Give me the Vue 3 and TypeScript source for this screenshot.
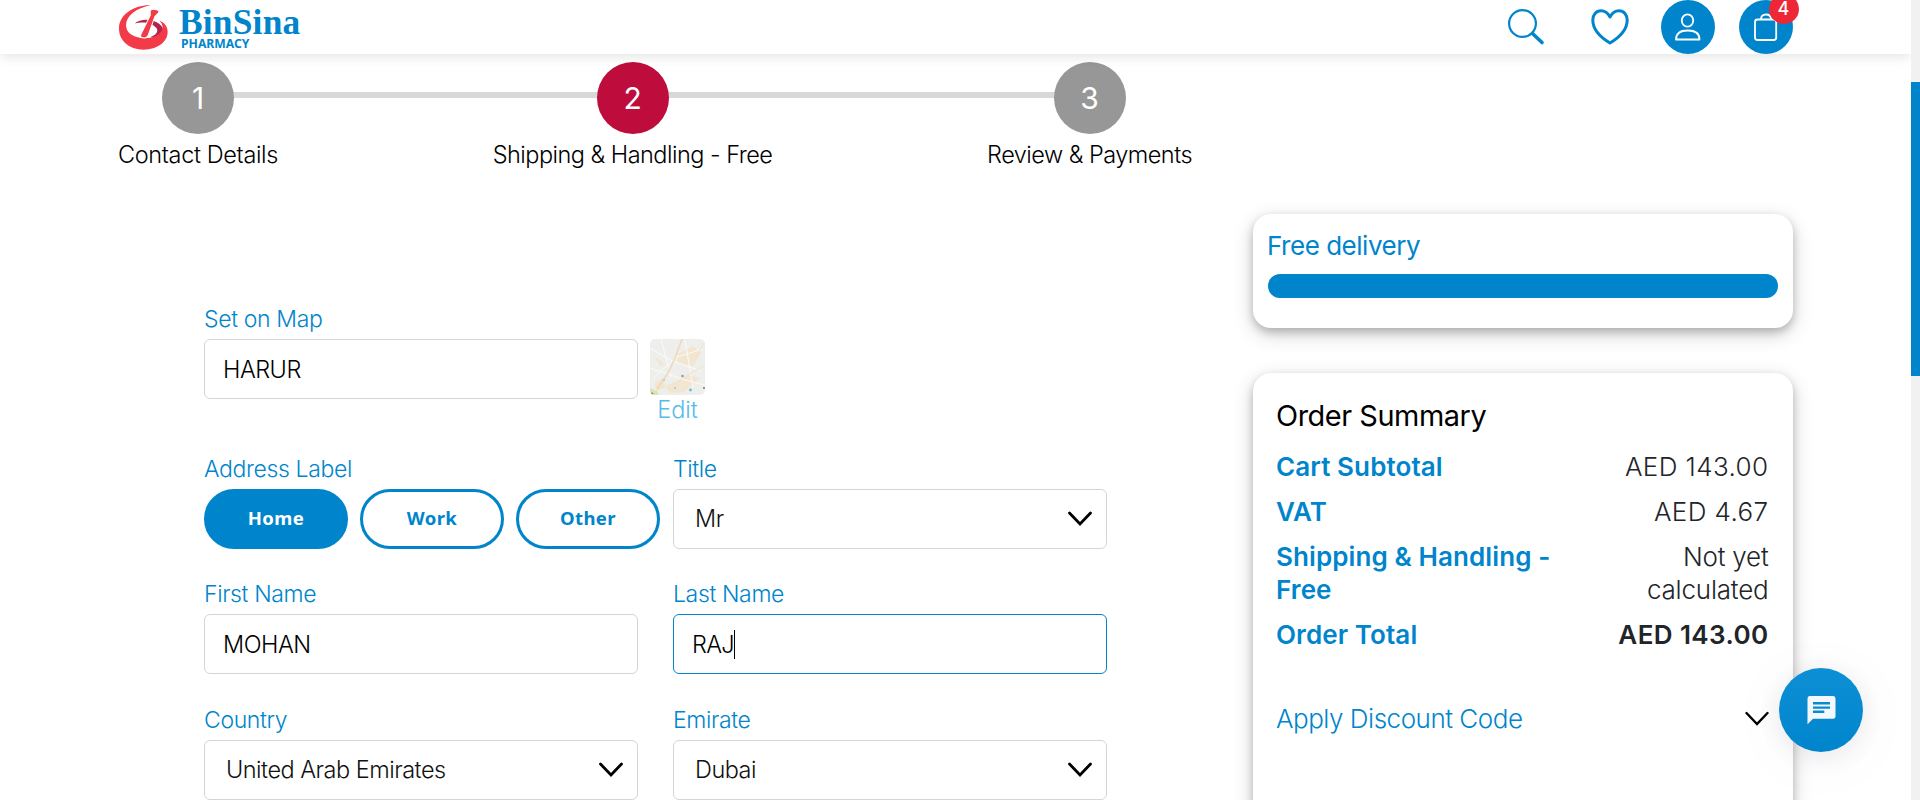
<script setup lang="ts">
interface Step { n: number; label: string; active?: boolean }
interface Field { label: string; value: string; kind: 'input' | 'select'; focused?: boolean }
interface Line { label: string; value: string; strong?: boolean; note?: boolean }

const steps: Step[] = [
  { n: 1, label: 'Contact Details' },
  { n: 2, label: 'Shipping & Handling - Free', active: true },
  { n: 3, label: 'Review & Payments' }
]
const tags = ['Home', 'Work', 'Other']
const fields: Field[] = [
  { label: 'Title', value: 'Mr', kind: 'select' },
  { label: 'First Name', value: 'MOHAN', kind: 'input' },
  { label: 'Last Name', value: 'RAJ', kind: 'input', focused: true },
  { label: 'Country', value: 'United Arab Emirates', kind: 'select' },
  { label: 'Emirate', value: 'Dubai', kind: 'select' }
]
const lines: Line[] = [
  { label: 'Cart Subtotal', value: 'AED 143.00' },
  { label: 'VAT', value: 'AED 4.67' },
  { label: 'Shipping & Handling - Free', value: 'Not yet calculated', note: true },
  { label: 'Order Total', value: 'AED 143.00', strong: true }
]
</script>

<template>
  <div class="screen">
    <div class="page">
      <header class="header">
        <div class="logo">
          <svg class="mark" viewBox="57 14 146 134">
            <path d="M104 69C118 57 142 55 160 62C182 70 193 84 188 98C178 110 164 112 150 110C168 104 176 92 168 82C156 68 128 62 104 69Z" fill="#b4234b" />
            <path d="M152 15C110 12 57 38 57 84C57 124 92 147 130 147C172 147 202 124 202 94C202 78 192 66 178 61C188 72 190 84 182 94C170 110 146 116 122 112C98 108 78 96 78 74C78 46 108 24 152 15Z" fill="#f23a48" />
            <path d="M150 31Q153 26 163 27L174 30Q178 33 174 38L164 48L144 104Q142 110 134 112L124 111Q120 108 122 102L150 45Z" fill="#f23a48" stroke="#fff" stroke-width="3" />
          </svg>
          <div class="brand"><span class="name">BinSina</span><span class="sub">PHARMACY</span></div>
        </div>
        <nav class="actions">
          <svg class="search" width="38" height="38" viewBox="0 0 38 38" fill="none" stroke="#0085cc">
            <circle cx="15.500" cy="15.500" r="13.400" stroke-width="2.200" /><path d="M25.500 25.500L35 34.500" stroke-width="3.600" stroke-linecap="round" />
          </svg>
          <svg class="heart" width="38" height="36" viewBox="0 0 38 36" fill="none" stroke="#0085cc" stroke-width="3" stroke-linejoin="round">
            <path d="M19 8C16.500 3.400 12.800 1.800 10 1.800C5 1.800 1.800 6 1.800 11C1.800 19.500 9 28 19 34C29 28 36.200 19.500 36.200 11C36.200 6 33 1.800 28 1.800C25.200 1.800 21.500 3.400 19 8Z" />
          </svg>
          <div class="round user">
            <svg width="28" height="30" viewBox="0 0 28 30" fill="none" stroke="#fff" stroke-width="1.800">
              <ellipse cx="13.500" cy="8.500" rx="5.700" ry="6.200" /><path d="M2 27.500Q2 18.500 13.700 18.500Q25.500 18.500 25.500 27.500Z" stroke-linejoin="round" />
            </svg>
          </div>
          <div class="round">
            <svg width="26" height="30" viewBox="0 0 26 30" fill="none" stroke="#fff" stroke-width="1.800">
              <rect x="2" y="7.500" width="21.200" height="20.500" rx="2.500" /><path d="M8 7.500Q8 2.500 13 2.500Q18 2.500 18 7.500" />
            </svg>
            <span class="badge">4</span>
          </div>
        </nav>
      </header>

      <ol class="steps">
        <li v-for="s in steps" :key="s.n" :class="{ active: s.active }">
          <span class="dot">{{ s.n }}</span><span class="caption">{{ s.label }}</span>
        </li>
      </ol>

      <main class="content">
        <section class="form">
          <div class="field map-field">
            <label>Set on Map</label>
            <div class="map-row">
              <div class="box">HARUR</div>
              <div class="map">
                <svg width="55" height="56" viewBox="0 0 55 56">
                  <rect width="55" height="56" fill="#eeeeec" />
                  <g fill="#f3e6d0"><path d="M28 15L43 7L51 14L43 27L27 24Z" /><path d="M4 17L15 25L10 27Z" /><path d="M5 44L13 39L15 48L6 53Z" /><path d="M16 49L38 36L50 39L34 53L20 54Z" /></g>
                  <g fill="none" stroke="#fafafa"><path d="M0 9L20 21L51 32M3 39L27 18L53 10M11 0L21 38M35 1L43 49M0 29L35 41L55 46" /></g>
                  <path d="M32 0L25 19L18 34L7 50" fill="none" stroke="#eed9b5" stroke-width="1.600" />
                  <path d="M8 50L25 44L41 34L54 27M54 4L46 19" fill="none" stroke="#f2e2c2" />
                  <path d="M0 49L8 53L8 56L0 56Z" fill="#d5e6b5" />
                  <circle cx="32.500" cy="37" r="1.300" fill="#a28fc7" /><circle cx="40.500" cy="51" r="1.400" fill="#6cbbd1" /><circle cx="2" cy="55" r="1.400" fill="#bc6753" /><circle cx="14" cy="41" r=".8" fill="#8db7d5" /><circle cx="25" cy="49" r=".8" fill="#80a5d0" /><circle cx="54" cy="49" r="1" fill="#777" />
                </svg>
                <a>Edit</a>
              </div>
            </div>
          </div>
          <div class="grid">
            <div class="field">
              <label>Address Label</label>
              <div class="tags">
                <button v-for="(t, i) in tags" :key="t" :class="{ on: i === 0 }">{{ t }}</button>
              </div>
            </div>
            <div v-for="f in fields" :key="f.label" class="field">
              <label>{{ f.label }}</label>
              <div class="box" :class="[f.kind, { focused: f.focused }]">
                <span>{{ f.value }}</span><i v-if="f.focused" class="caret"></i>
                <svg v-if="f.kind === 'select'" class="chevron" width="24" height="16" viewBox="0 0 24 16"><path d="M1.500 2L12 13L22.500 2" /></svg>
              </div>
            </div>
          </div>
        </section>

        <aside class="side">
          <div class="card delivery">
            <p>Free delivery</p>
            <div class="bar"></div>
          </div>
          <div class="card summary">
            <h2>Order Summary</h2>
            <dl>
              <div v-for="l in lines" :key="l.label" :class="{ strong: l.strong, note: l.note }">
                <dt>{{ l.label }}</dt><dd>{{ l.value }}</dd>
              </div>
            </dl>
            <div class="discount">
              <span>Apply Discount Code</span>
              <svg class="chevron" width="24" height="16" viewBox="0 0 24 16"><path d="M1.500 2L12 13L22.500 2" /></svg>
            </div>
          </div>
        </aside>
      </main>

      <button class="chat" aria-label="Chat">
        <svg width="29" height="29" viewBox="0 0 29 29">
          <path d="M3 0H26Q28.500 0 28.500 3V20Q28.500 22.800 26 22.800H6L.5 28.300V3Q.5 0 3 0Z" fill="#f2f8fd" />
          <path d="M6 7.300H23M6 11.600H23M6 15.800H17.300" stroke="#0a8bd0" stroke-width="2.400" />
        </svg>
      </button>
    </div>
    <div class="scrollbar"><div class="thumb"></div></div>
  </div>
</template>

<style>
body { margin: 0; overflow: hidden; }
</style>

<style scoped>
.screen { display: flex; width: 1920px; height: 800px; overflow: hidden; background: #fff; font-family: Inter, "Liberation Sans", sans-serif; color: #000; }
.page { position: relative; width: 1911px; height: 800px; overflow: hidden; }
.scrollbar { width: 9px; padding-top: 82px; background: #f1f1f1; box-sizing: border-box; }
.thumb { height: 294px; background: #0085cc; }

.header { position: relative; display: flex; justify-content: space-between; height: 54px; padding: 0 118px 0 119px; background: #fff; box-shadow: 0 2px 12px rgba(0, 0, 0, .12); }
.logo { display: flex; gap: 11px; }
.mark { width: 49px; height: 45px; margin-top: 4.500px; }
.brand { display: flex; flex-direction: column; color: #0085cc; }
.name { height: 36px; font: 700 35.400px/45px "Liberation Serif", serif; letter-spacing: .2px; }
.sub { margin-left: 2px; font: 700 12.200px/16px "Noto Sans", sans-serif; }
.actions { display: flex; }
.search { margin: 8px 46px 0 0; }
.heart { margin: 9px 32px 0 0; }
.round { position: relative; display: flex; align-items: center; justify-content: center; width: 54px; height: 54px; border-radius: 50%; background: #0085cc; }
.user { margin-right: 24px; }
.round svg { margin-left: -1px; }
.badge { position: absolute; top: -6px; left: 30px; width: 30px; height: 30px; border-radius: 50%; background: #ee2737; color: #fff; font-size: 18px; font-weight: 500; line-height: 30px; text-align: center; text-indent: -1px; }

.steps { display: flex; justify-content: space-between; width: 1074px; margin: 8px 0 0 118px; padding: 0; list-style: none; background: linear-gradient(#d8d8d8, #d8d8d8) 80px 30px / 890px 6px no-repeat; }
.steps li { display: flex; flex-direction: column; align-items: center; }
.steps li:first-child .caption { letter-spacing: -.36px; }
.dot { width: 72px; height: 72px; border-radius: 50%; background: #979797; color: #fff; font-size: 30px; line-height: 72px; text-align: center; }
.active .dot { background: #be0c3d; }
.caption { font-size: 23.500px; font-weight: 360; line-height: 41px; letter-spacing: -.52px; white-space: nowrap; }

.content { display: flex; }
.form { width: 904px; margin: 123px 145px 0 204px; flex: none; }
.field label { display: block; height: 41px; color: #0085cc; font-size: 23px; font-weight: 360; line-height: 42px; letter-spacing: -.36px; white-space: nowrap; }
.box { display: flex; align-items: center; box-sizing: border-box; width: 434px; height: 60px; padding: 0 14px 0 18px; border: 1px solid #d5d5d5; border-radius: 6px; font-size: 23.500px; font-weight: 360; letter-spacing: -.5px; }
.box.select { padding-left: 21px; color: #111; }
.box.focused { border-color: #0085cc; }
.focused span { letter-spacing: -.7px; }
.caret { width: 1px; height: 29px; background: #000; }
.chevron { margin-left: auto; fill: none; stroke: #000; stroke-width: 2.800; stroke-linecap: round; }
.map-field { height: 149.500px; }
.map-row { display: flex; gap: 12px; }
.map { width: 55px; text-align: center; }
.map svg { display: block; border-radius: 5px; }
.map a { display: block; color: #55bde8; font-size: 23.500px; font-weight: 360; line-height: 29px; letter-spacing: 0; }
.grid { display: grid; grid-template-columns: 434px 434px; column-gap: 35px; grid-auto-rows: 101px; row-gap: 24.500px; }
.tags { display: flex; gap: 12px; }
.tags button { flex: none; box-sizing: border-box; width: 144px; height: 60.500px; padding: 0 0 2px; border: 3px solid #0085cc; border-radius: 31px; background: #fff; color: #0085cc; font: 700 18.500px "Noto Sans", sans-serif; letter-spacing: .4px; }
.tags .on { background: #0085cc; color: #fff; }

.side { width: 540px; margin-top: 39px; flex: none; }
.card { box-sizing: border-box; border-radius: 18px; background: #fff; box-shadow: 0 6px 20px rgba(0, 0, 0, .19), 0 4px 8px rgba(0, 0, 0, .2); }
.delivery { height: 114px; padding: 16px 15px 16px 14px; }
.delivery p { margin: 0; color: #0085cc; font-size: 26px; line-height: 32px; letter-spacing: -.48px; }
.bar { height: 24px; margin: 12px 0 0 1px; border-radius: 12px; background: #0085cc; }
.summary { height: 480px; margin-top: 44.500px; padding: 21px 25px 0 23px; }
h2 { margin: 0 0 13.500px; font-size: 28.900px; font-weight: 400; line-height: 43px; letter-spacing: -.45px; }
dl { display: flex; flex-direction: column; gap: 12px; margin: 0; font-size: 26px; line-height: 33px; }
dl > div { display: flex; justify-content: space-between; }
dt { width: 295px; color: #0085cc; font-weight: 630; letter-spacing: .1px; }
dd { width: 160px; margin: 0 -.5px 0 0; color: #212529; font-weight: 320; letter-spacing: .4px; text-align: right; }
.note dd { letter-spacing: -.2px; }
.strong dd { font-weight: 640; letter-spacing: .4px; }
.discount { display: flex; align-items: center; height: 33px; margin-top: 51px; color: #0085cc; font-size: 26px; font-weight: 360; letter-spacing: -.48px; }
.discount .chevron { margin-right: -1px; stroke-width: 2.400; }

.chat { position: absolute; top: 668px; left: 1779px; display: flex; align-items: center; justify-content: center; width: 84px; height: 84px; padding: 0; border: 0; border-radius: 50%; background: linear-gradient(#0d8fd5, #0085cc); box-shadow: 0 4px 24px rgba(60, 20, 70, .09), 0 8px 72px rgba(60, 20, 70, .04); }
</style>
